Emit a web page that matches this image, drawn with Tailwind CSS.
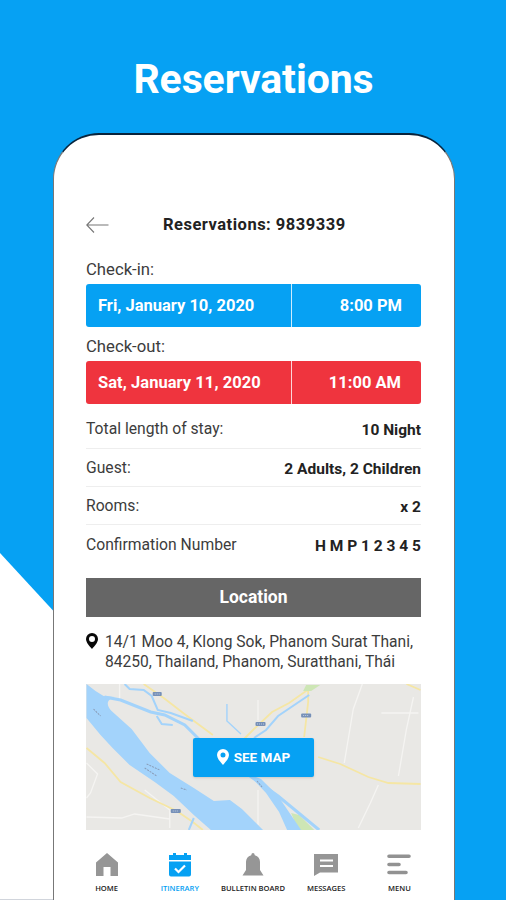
<!DOCTYPE html>
<html lang="en">
<head>
<meta charset="utf-8">
<title>Reservations</title>
<script src="https://cdn.jsdelivr.net/npm/@tailwindcss/browser@4"></script>
</head>
<body class="font-[Roboto,sans-serif]">
<main class="relative h-[900px] w-[506px] overflow-hidden bg-[#06a1f3]">
  <div class="absolute top-[553px] left-0 h-[347px] w-[320px] border-b border-gray-300 bg-white [clip-path:polygon(0_0,100%_100%,0_100%)]"></div>
  <div class="relative flex h-full flex-col items-center">
    <h1 class="mt-[55px] ml-px h-[78px] text-[41px] leading-[48px] font-bold text-white tracking-[-0.1px]">Reservations</h1>
    <section class="ml-px flex h-[767px] w-[402px] shrink-0 flex-col rounded-t-[46px] border-x border-t-2 border-x-[#777] border-t-[#08243c] bg-white px-[32.5px] text-[#3c3c3c]">
      <header class="mt-[78px] flex h-[24px] items-center">
        <svg class="h-[18px] w-[23px]" viewBox="0 0 23 18" fill="none" stroke="#777" stroke-width="1.1"><path d="M22.500 9H1M8 1.500 0.800 9 8 16.500"/></svg>
        <h2 class="ml-[54px] whitespace-nowrap text-[16.5px] font-bold tracking-[0.5px] text-[#222]">Reservations: 9839339</h2>
      </header>
      <p class="mt-[22px] h-[25px] text-[16.7px] leading-[22px]">Check-in:</p>
      <div class="flex h-[43px] shrink-0 items-center rounded-[3px] bg-[#06a1f3] pt-px text-[16.5px] font-bold text-white">
        <span class="-mt-px flex h-[43px] w-[206px] items-center border-r border-white/80 pt-px pl-[12px]">Fri, January 10, 2020</span>
        <span class="flex-1 pr-[19px] text-right">8:00 PM</span>
      </div>
      <p class="mt-[8px] h-[26px] text-[16.7px] leading-[23px]">Check-out:</p>
      <div class="flex h-[43px] shrink-0 items-center rounded-[3px] bg-[#ef343e] pt-px text-[16.5px] font-bold text-white">
        <span class="-mt-px flex h-[43px] w-[206px] items-center border-r border-white/80 pt-px pl-[12px] tracking-[0.050px]">Sat, January 11, 2020</span>
        <span class="flex-1 pr-[20px] text-right">11:00 AM</span>
      </div>
      <dl class="mt-[5px] flex flex-col text-[15.7px] leading-[20px]">
        <div class="flex h-[40px] items-center justify-between border-b border-[#eee]"><dt class="pt-px">Total length of stay:</dt><dd class="pt-[3px] text-[15.5px] font-bold text-[#222]">10 Night</dd></div>
        <div class="flex h-[38px] items-center justify-between border-b border-[#eee]"><dt>Guest:</dt><dd class="pt-[3px] text-[15.5px] font-bold text-[#222]">2 Adults, 2 Children</dd></div>
        <div class="flex h-[38px] items-center justify-between border-b border-[#eee]"><dt>Rooms:</dt><dd class="pt-[3px] text-[15.5px] font-bold text-[#222]">x 2</dd></div>
        <div class="flex h-[39px] items-center justify-between"><dt class="pt-px">Confirmation Number</dt><dd class="pt-[2px] text-[15.5px] font-bold text-[#222]">H M P 1 2 3 4 5</dd></div>
      </dl>
      <h3 class="mt-[14px] flex h-[39px] shrink-0 items-center justify-center bg-[#666] text-[17.5px] font-bold text-white">Location</h3>
      <div class="mt-[15px] flex h-[52px] shrink-0 text-[15.6px] leading-[19.5px]">
        <svg class="mt-px h-[16px] w-[12px] shrink-0" viewBox="0 0 12 16"><path fill="#080808" fill-rule="evenodd" d="M6 0a6 6 0 0 0-6 6c0 3.500 3.500 7 6 10 2.500-3 6-6.500 6-10a6 6 0 0 0-6-6Zm0 3a3 3 0 1 1 0 6 3 3 0 0 1 0-6Z"/></svg>
        <p class="ml-[7px] pt-px whitespace-nowrap">14/1 Moo 4, Klong Sok, Phanom Surat Thani,<br>84250, Thailand, Phanom, Suratthani, Thái</p>
      </div>
      <div class="relative grid h-[146px] shrink-0 place-items-center overflow-hidden">
        <svg class="absolute inset-0 h-full w-full" viewBox="86.5 684 334 146" preserveAspectRatio="none" fill="none">
          <path fill="#e9e8e5" d="M86 684h335v146H86z"/>
          <g stroke="#f5f4f2" stroke-width="1.300">
            <path d="M87 763l11 11-7 19-4 5M87 817l35 1 13-4 35 5M362 684l-9 25-9 54M413 697l-7 32-8 47M381 713h37M378 785l-8 18-12 25M258 700v20M258 790v35M120 684v15M145 790l25 20v18"/>
          </g>
          <g stroke="#f5e6a4" stroke-width="1.800">
            <path d="M144 684l20 14 22 17 27 20M87 748l18 15 16 19 29 16 27 13 16 11 10 8M244 739l10-10 18-17 17-9 24-17M308 686v16l-4 35M318 757l22 7 28 13 20 6 32 1M406 684l14 6"/>
          </g>
          <path fill="#cde6b5" d="M306 685h14l-9 6h-8zM291 813l8 2 15 15h-16z"/>
          <path fill="#a3d3fb" d="M87 684l9 7 8 5 11 1c-9 3-8 9-3 14l20 18 18 24 20 20 24 15 20 13 16-1 12 9 21 21h-52l-17-15-20-19-19-14-25-17-17-17-12-13-14-17z"/>
          <path fill="#a3d3fb" d="M248 774l13 5 17 17 23 34h-14l-8-18-13-19z"/>
          <g stroke="#a3d3fb">
            <path stroke-width="3" d="M105 697l16 3 30 12 14 3 20 10 14 14M250 776l28 20 41 34"/>
            <path stroke-width="2" d="M125 684l5 5 14 1 8 6 6 14 13 3 22 8M157 716l5 8 11 1"/>
            <path stroke-width="1.400" d="M227 704v17l14 13"/>
            <path stroke-width="2" d="M254 738l12-8 12-14 31-21M189 830l5-12"/>
          </g>
          <path stroke="#899bb6" stroke-width="1" stroke-dasharray="2 1" d="M94 709l7 7M147 764l13 6M145 768l12 8M181 788l6 2M257 781l5 6"/>
          <g fill="#7690b8"><rect x="153" y="692" width="9" height="4" rx="1"/><rect x="171" y="809" width="10" height="4" rx="1"/><rect x="255.500" y="722" width="10" height="4" rx="1"/><rect x="301" y="713.500" width="10" height="4" rx="1"/></g>
          <path stroke="#d5dde9" stroke-width=".8" stroke-dasharray="1 1" d="M155 694h5M173 811h6M257 724h7M303 715.500h6"/>
        </svg>
        <button class="relative flex h-[39px] w-[121px] items-center justify-center gap-[5px] rounded-[2px] bg-[#06a1f3] text-[13.5px] font-bold text-white shadow-sm">
          <svg class="h-[16px] w-[12px]" viewBox="0 0 12 16"><path fill="#fff" fill-rule="evenodd" d="M6 0a6 6 0 0 0-6 6c0 3.500 3.500 7 6 10 2.500-3 6-6.500 6-10a6 6 0 0 0-6-6Zm0 3.500a2.500 2.500 0 1 1 0 5 2.500 2.500 0 0 1 0-5Z"/></svg>
          SEE MAP
        </button>
      </div>
      <nav class="mt-[23px] -ml-[16px] grid w-[366px] grid-cols-5 text-center font-['Open_Sans',sans-serif] text-[7.6px] leading-[10px] font-semibold text-[#222]">
        <a class="flex flex-col items-center gap-[6px] whitespace-nowrap"><svg class="h-[24px] w-[24px]" viewBox="0 0 24 24"><path fill="#969696" d="M12 0 1 9.500V23h7.500v-9h7v9H23V9.500Z"/></svg>HOME</a>
        <a class="flex flex-col items-center gap-[6px] whitespace-nowrap text-[#06a1f3]"><svg class="h-[24px] w-[24px]" viewBox="0 0 24 24"><path fill="#06a1f3" d="M1 2h4V0h3v2h8V0h3v2h4v5H1ZM1 8.500h22v13q0 2-2 2H3q-2 0-2-2Z"/><path d="m7 15.500 3.500 3.500 6.500-6.500" fill="none" stroke="#fff" stroke-width="2.200"/></svg>ITINERARY</a>
        <a class="flex flex-col items-center gap-[6px] whitespace-nowrap"><svg class="h-[24px] w-[24px]" viewBox="0 0 24 24"><path fill="#969696" d="M12 0q1.500 0 1.800 2.200Q19 4 19 9v8l3.500 5.500h-21L5 17V9q0-5 5.200-6.800Q10.500 0 12 0Z"/></svg>BULLETIN BOARD</a>
        <a class="flex flex-col items-center gap-[6px] whitespace-nowrap"><svg class="h-[24px] w-[24px]" viewBox="0 0 24 24"><path fill="#969696" d="M0 1h24v18.500H6L0 23Z"/><path d="M6 7.500h13M6 13h13" stroke="#fff" stroke-width="2.200"/></svg>MESSAGES</a>
        <a class="flex flex-col items-center gap-[6px] whitespace-nowrap"><svg class="h-[24px] w-[24px]" viewBox="0 0 24 24"><path d="M2 3.300h20M2 11.500h10M2 19.500h17" stroke="#929292" stroke-width="3.600" stroke-linecap="round"/></svg>MENU</a>
      </nav>
    </section>
  </div>
</main>
</body>
</html>
